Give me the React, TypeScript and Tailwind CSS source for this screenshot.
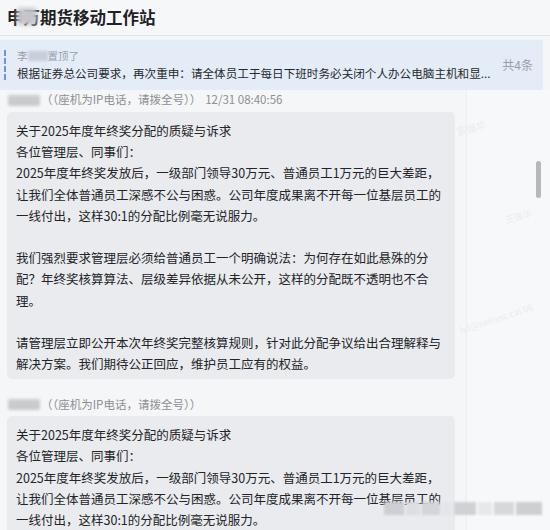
import React from "react";

const FONT = { fontFamily: '"Noto Sans CJK SC", "Noto Sans", sans-serif' };

const msg1 = [
  "关于2025年度年终奖分配的质疑与诉求",
  "各位管理层、同事们：",
  "2025年度年终奖发放后，一级部门领导30万元、普通员工1万元的巨大差距，",
  "让我们全体普通员工深感不公与困惑。公司年度成果离不开每一位基层员工的",
  "一线付出，这样30:1的分配比例毫无说服力。",
  "",
  "我们强烈要求管理层必须给普通员工一个明确说法：为何存在如此悬殊的分",
  "配？年终奖核算算法、层级差异依据从未公开，这样的分配既不透明也不合",
  "理。",
  "",
  "请管理层立即公开本次年终奖完整核算规则，针对此分配争议给出合理解释与",
  "解决方案。我们期待公正回应，维护员工应有的权益。",
];

const msg2 = msg1.slice(0, 6);

function Blob({ w }: { w: string }) {
  return <span className={`inline-block h-[11px] ${w} rounded-[2px] bg-[#c9cbce] blur-[1.5px] align-middle`} />;
}

function Header({ time }: { time?: string }) {
  return (
    <div className="flex items-center h-[18px] pl-[8px] text-[11.5px] text-[#8d8f93] whitespace-nowrap">
      <Blob w="w-[32px]" />
      <span className="ml-[1px]">（（座机为IP电话，请拨全号））</span>
      {time && <span className="ml-[4px]">{time}</span>}
    </div>
  );
}

function Bubble({ lines, cut }: { lines: string[]; cut?: boolean }) {
  return (
    <div
      className={`ml-[7px] w-[448px] bg-[#e9ebee] rounded-[5px] pl-[9px] pt-[8px] ${cut ? "pb-[0px]" : "pb-[5px]"} text-[12.5px] leading-[21.2px] text-[#222427]`}
    >
      {lines.map((l, i) => (
        <div key={i} className="whitespace-nowrap h-[21.2px]">
          {l || "\u00a0"}
        </div>
      ))}
    </div>
  );
}

export default function App() {
  return (
    <div style={FONT} className="relative w-[550px] h-[530px] overflow-hidden bg-[#f5f6f8] flex flex-col">
      {/* title bar */}
      <div className="h-[36px] shrink-0 flex items-center pl-[7px] bg-[#f6f7f9] border-b border-[#e4e6ea]">
        <div className="relative text-[16.5px] font-bold text-[#1f2124] tracking-[0px]">
          申万期货移动工作站
          <span className="absolute left-[10px] top-[3px] w-[20px] h-[17px] rounded-[3px] bg-[#c4c6c9] blur-[2px]" />
        </div>
      </div>

      {/* pinned banner */}
      <div className="mt-[4px] w-[543px] h-[50px] shrink-0 bg-[#e4ecf8] flex items-center">
        <div className="ml-[4px] h-[30px] border-l-2 border-dashed border-[#6d97d6]" />
        <div className="ml-[11px] flex-1 flex flex-col justify-center gap-[2px]">
          <div className="flex items-center text-[10.5px] text-[#9aa0a8] leading-[14px]">
            <span>李</span>
            <span className="inline-block w-[20px] h-[10px] bg-[#c9cfd8] blur-[1.5px]" />
            <span>置顶了</span>
          </div>
          <div className="text-[11.6px] text-[#26282b] leading-[16px] whitespace-nowrap">
            根据证券总公司要求，再次重申：请全体员工于每日下班时务必关闭个人办公电脑主机和显...
          </div>
        </div>
        <div className="mr-[10px] text-[12px] text-[#9aa0a8]">共4条</div>
      </div>

      {/* messages */}
      <div className="relative flex-1 flex">
        <div className="w-[467px] border-r border-[#eceef1] pt-[1px]">
          <Header time="12/31 08:40:56" />
          <div className="mt-[3px]">
            <Bubble lines={msg1} />
          </div>
          <div className="mt-[16px]">
            <Header />
          </div>
          <div className="mt-[3px]">
            <Bubble lines={msg2} cut />
          </div>
        </div>
        <div className="flex-1 bg-[#f7f8fa]" />

        {/* scrollbar thumb */}
        <div className="absolute left-[536px] top-[71px] w-[5px] h-[37px] rounded-full bg-[#b6b8bb]" />

        {/* watermarks */}
        <div className="absolute left-[456px] top-[30px] -rotate-[15deg] text-[10px] text-[#ebecef]">宣强华</div>
        <div className="absolute left-[505px] top-[120px] -rotate-[15deg] text-[9px] text-[#ebecef]">王强华</div>
        <div className="absolute left-[458px] top-[222px] -rotate-[18deg] text-[9px] text-[#ebecef] whitespace-nowrap">
          hd@swhysc.cal 06
        </div>

        {/* mosaic at bottom */}
        <div className="absolute left-[384px] top-[412px] w-[158px] h-[13px] flex gap-[2px] blur-[1px]">
          <span className="w-[20px] bg-[#cdcfd2]" />
          <span className="w-[14px] bg-[#dcdee1]" />
          <span className="w-[18px] bg-[#d3d5d8]" />
          <span className="w-[10px] bg-[#e3e5e8]" />
          <span className="w-[22px] bg-[#cfd1d4]" />
          <span className="w-[14px] bg-[#e6e8eb]" />
          <span className="w-[20px] bg-[#d6d8db]" />
          <span className="w-[26px] bg-[#cdcfd2]" />
        </div>
      </div>
    </div>
  );
}
